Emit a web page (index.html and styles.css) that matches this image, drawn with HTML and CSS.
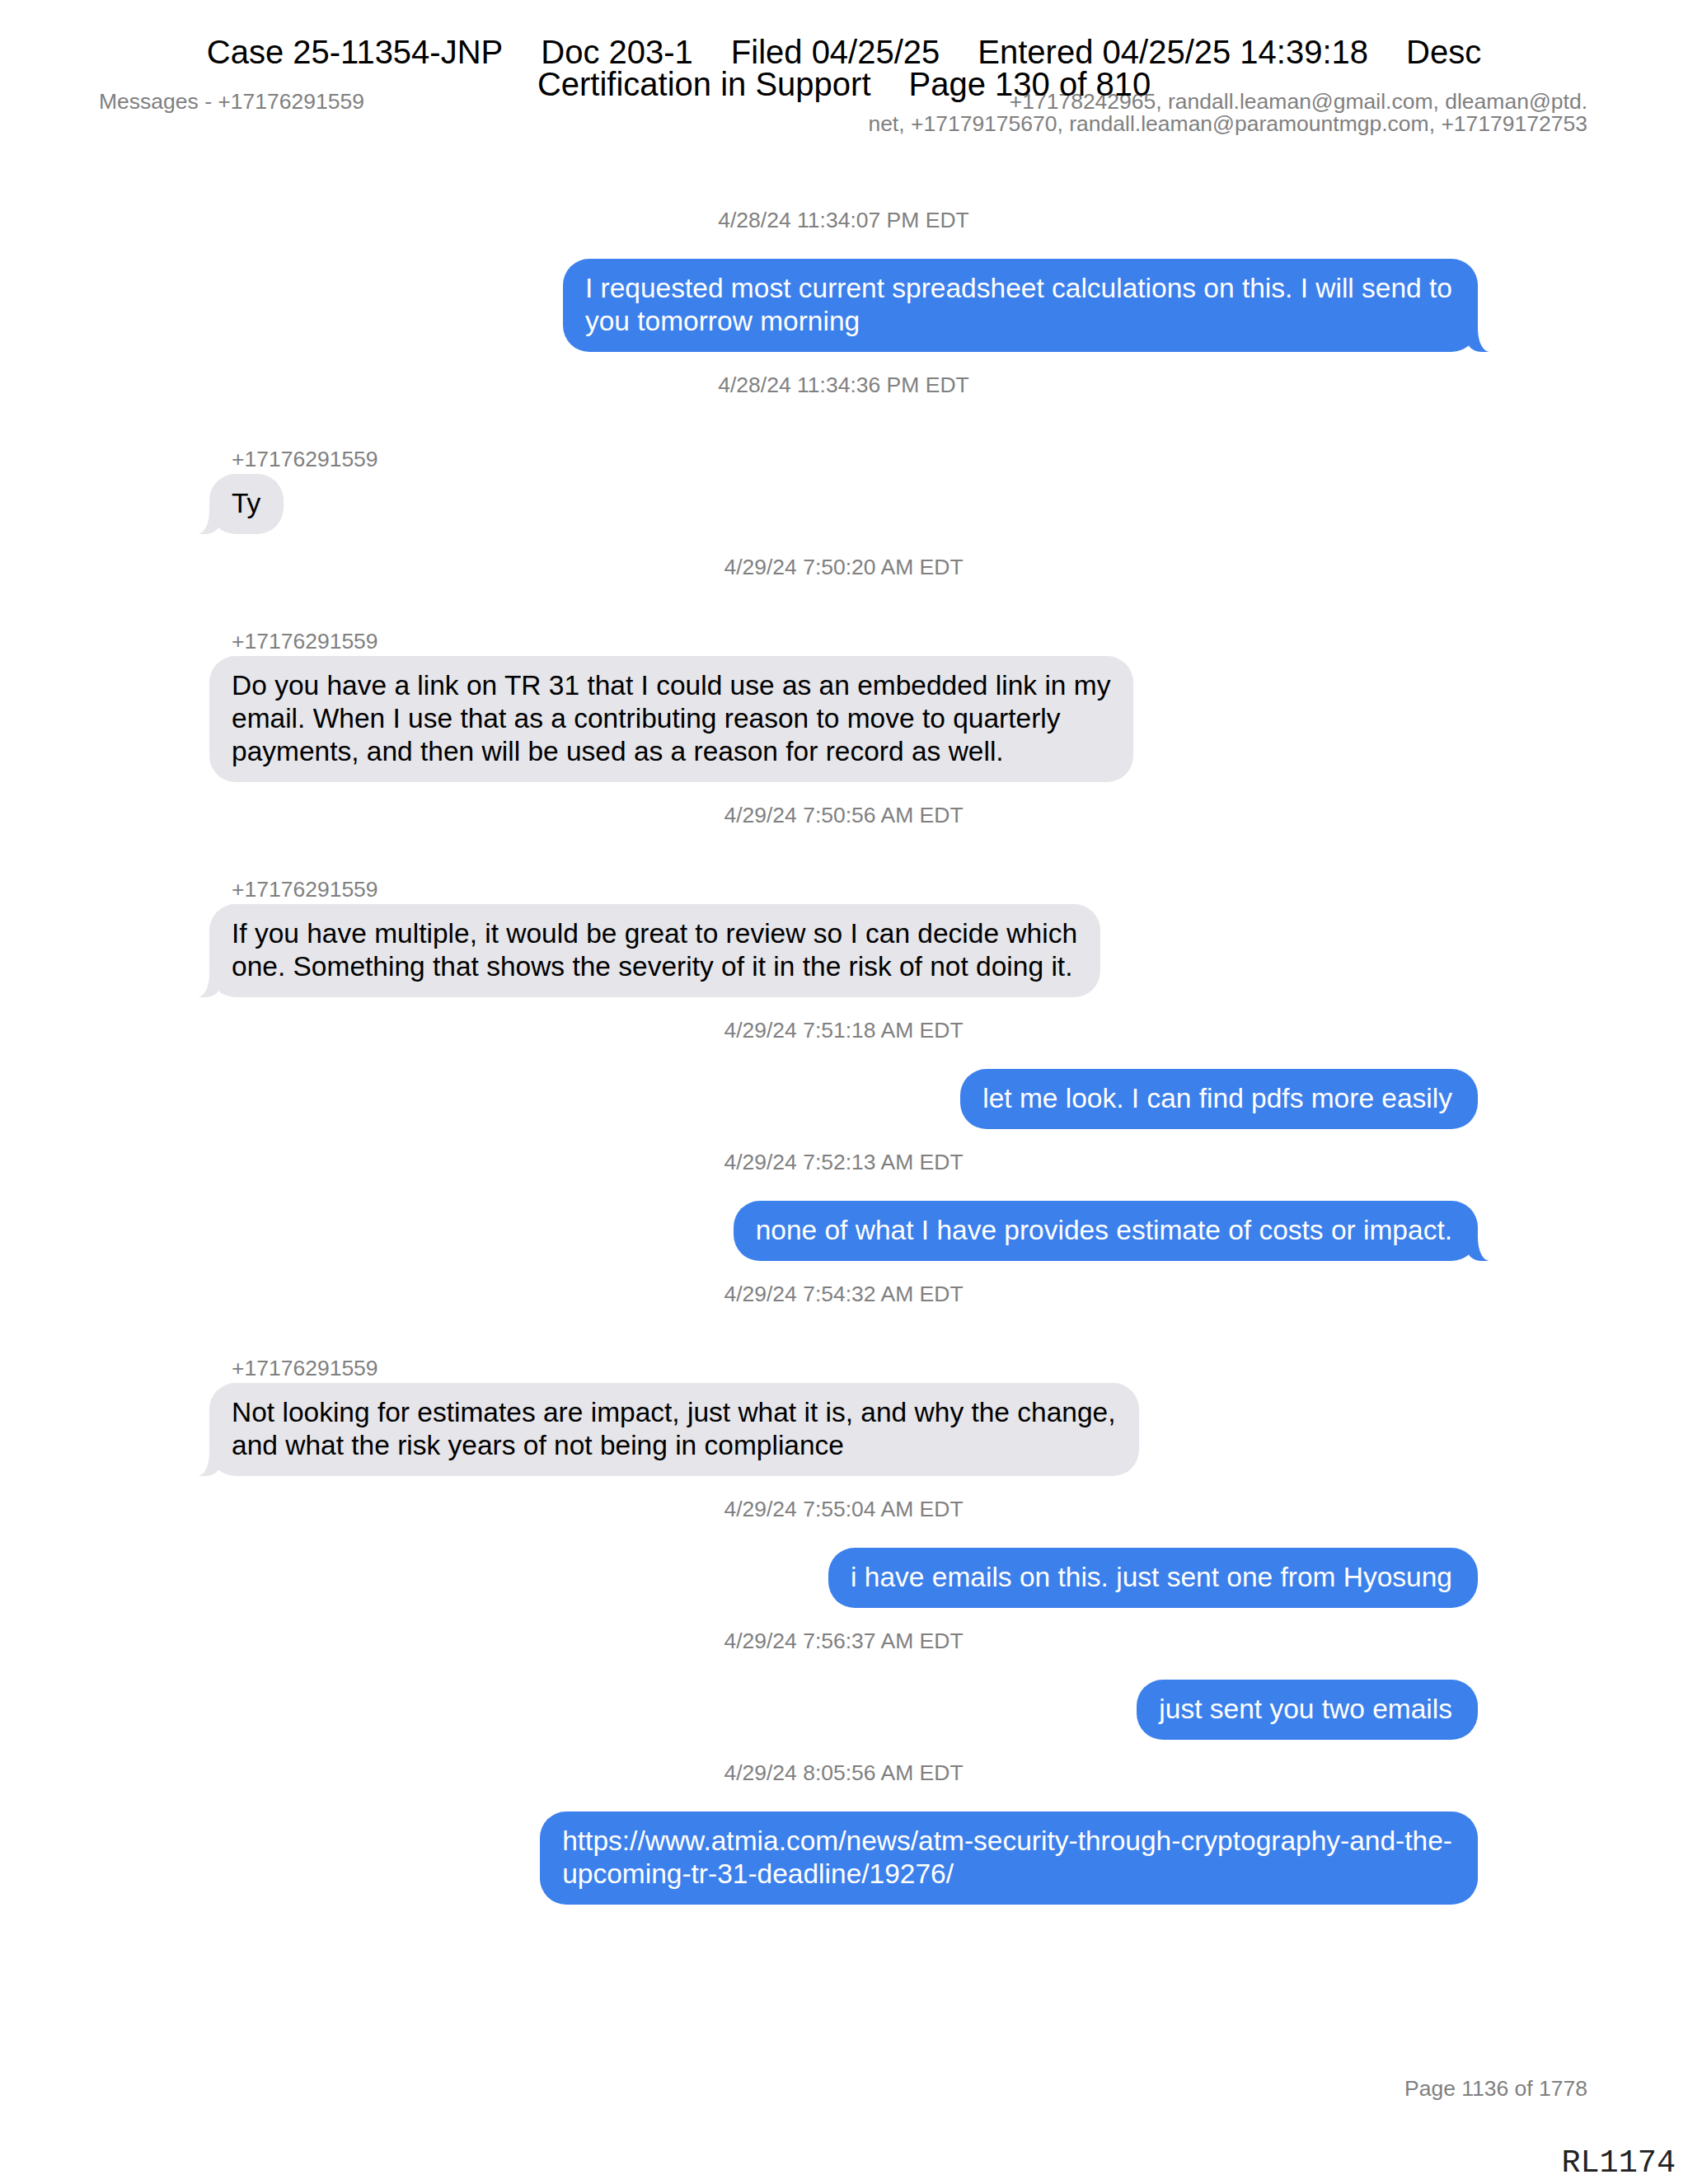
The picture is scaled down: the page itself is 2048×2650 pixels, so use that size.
FILE: index.html
```html
<!DOCTYPE html>
<html lang="en">
<head>
  <meta charset="UTF-8" />
  <title>Messages - +17176291559</title>
  <link rel="stylesheet" href="styles.css">
</head>
<body>

<div class="page">

  <!-- Court filing stamp, printed over the page -->
  <div class="stamp">
    <div class="stamp-line">
      <span>Case 25-11354-JNP</span>
      <span>Doc 203-1</span>
      <span>Filed 04/25/25</span>
      <span>Entered 04/25/25 14:39:18</span>
      <span>Desc</span>
    </div>
    <div class="stamp-line">
      <span>Certification in Support</span>
      <span>Page 130 of 810</span>
    </div>
  </div>

  <header class="top">
    <div class="title">Messages - +17176291559</div>
    <div class="people">+17178242965, randall.leaman@gmail.com, dleaman@ptd.<br>net, +17179175670, randall.leaman@paramountmgp.com, +17179172753</div>
  </header>

  <main class="chat">

    <div class="message sent">
      <div class="time">4/28/24 11:34:07 PM EDT</div>
      <div class="bubble tail">I requested most current spreadsheet calculations on this. I will send to<br>you tomorrow morning</div>
    </div>

    <div class="message received">
      <div class="time">4/28/24 11:34:36 PM EDT</div>
      <div class="sender">+17176291559</div>
      <div class="bubble tail">Ty</div>
    </div>

    <div class="message received">
      <div class="time">4/29/24 7:50:20 AM EDT</div>
      <div class="sender">+17176291559</div>
      <div class="bubble">Do you have a link on TR 31 that I could use as an embedded link in my<br>email. When I use that as a contributing reason to move to quarterly<br>payments, and then will be used as a reason for record as well.</div>
    </div>

    <div class="message received">
      <div class="time">4/29/24 7:50:56 AM EDT</div>
      <div class="sender">+17176291559</div>
      <div class="bubble tail">If you have multiple, it would be great to review so I can decide which<br>one. Something that shows the severity of it in the risk of not doing it.</div>
    </div>

    <div class="message sent">
      <div class="time">4/29/24 7:51:18 AM EDT</div>
      <div class="bubble">let me look. I can find pdfs more easily</div>
    </div>

    <div class="message sent">
      <div class="time">4/29/24 7:52:13 AM EDT</div>
      <div class="bubble tail">none of what I have provides estimate of costs or impact.</div>
    </div>

    <div class="message received">
      <div class="time">4/29/24 7:54:32 AM EDT</div>
      <div class="sender">+17176291559</div>
      <div class="bubble tail">Not looking for estimates are impact, just what it is, and why the change,<br>and what the risk years of not being in compliance</div>
    </div>

    <div class="message sent">
      <div class="time">4/29/24 7:55:04 AM EDT</div>
      <div class="bubble">i have emails on this. just sent one from Hyosung</div>
    </div>

    <div class="message sent">
      <div class="time">4/29/24 7:56:37 AM EDT</div>
      <div class="bubble">just sent you two emails</div>
    </div>

    <div class="message sent">
      <div class="time">4/29/24 8:05:56 AM EDT</div>
      <div class="bubble">https://www.atmia.com/news/atm-security-through-cryptography-and-the-<br>upcoming-tr-31-deadline/19276/</div>
    </div>

  </main>

  <footer>
    <div class="page-number">Page 1136 of 1778</div>
    <div class="bates">RL1174</div>
  </footer>

</div>

</body>
</html>
```

FILE: styles.css
```css
/* Reset and base font */
* {
  margin: 0;
  padding: 0;
  box-sizing: border-box;
}

body {
  background: #fff;
  font-family: 'Liberation Sans', Arial, sans-serif;
  color: #000;
}

.page {
  position: relative;
  width: 2048px;
}

/* Filing stamp over the header */
.stamp {
  position: absolute;
  top: 44px;
  left: 0;
  right: 0;
  font-size: 40px;
  line-height: 39px;
  color: #000;
}

.stamp-line {
  display: flex;
  justify-content: center;
  gap: 46px;
}

/* Header */
.top {
  display: flex;
  justify-content: space-between;
  padding: 110px 122px 0 120px;
  font-size: 26.5px;
  line-height: 27px;
  color: #808080;
}

.people {
  text-align: right;
  white-space: nowrap;
}

/* Conversation */
.chat {
  display: flex;
  flex-direction: column;
  gap: 25px;
  padding: 88px 255px 0 254px;
}

.message {
  display: flex;
  flex-direction: column;
}

.message.sent {
  align-items: flex-end;
}

.message.received {
  align-items: flex-start;
}

.time {
  align-self: stretch;
  text-align: center;
  font-size: 26.5px;
  line-height: 30px;
  color: #808080;
  margin-bottom: 32px;
}

.received .time {
  margin-bottom: 60px;
}

.sender {
  font-size: 26.5px;
  line-height: 30px;
  color: #808080;
  padding-left: 27px;
  margin-bottom: 3px;
}

.bubble {
  position: relative;
  max-width: 1180px;
  padding: 16px 31px 17px 27px;
  border-radius: 32px;
  font-size: 33.5px;
  line-height: 40px;
}

.sent .bubble {
  background: #3c80ec;
  color: #fff;
}

.received .bubble {
  background: #e5e5ea;
  color: #000;
  padding-right: 28px;
}

/* Bubble tails */
.bubble.tail::before,
.bubble.tail::after {
  content: "";
  position: absolute;
  bottom: 0;
  height: 30px;
}

.sent .bubble.tail::before {
  right: -13px;
  width: 26px;
  background: #3c80ec;
  border-bottom-left-radius: 18px 14px;
}

.sent .bubble.tail::after {
  right: -16px;
  width: 16px;
  background: #fff;
  border-bottom-left-radius: 14px 28px;
}

.received .bubble.tail::before {
  left: -13px;
  width: 26px;
  background: #e5e5ea;
  border-bottom-right-radius: 18px 14px;
}

.received .bubble.tail::after {
  left: -16px;
  width: 16px;
  background: #fff;
  border-bottom-right-radius: 14px 28px;
}

/* Footer */
.page-number {
  margin-top: 208px;
  padding-right: 122px;
  text-align: right;
  font-size: 26.5px;
  line-height: 30px;
  color: #808080;
}

.bates {
  margin-top: 56px;
  padding-right: 15px;
  text-align: right;
  font-family: 'Liberation Mono', 'Courier New', monospace;
  font-size: 38.5px;
  line-height: 40px;
  color: #222;
}
```
